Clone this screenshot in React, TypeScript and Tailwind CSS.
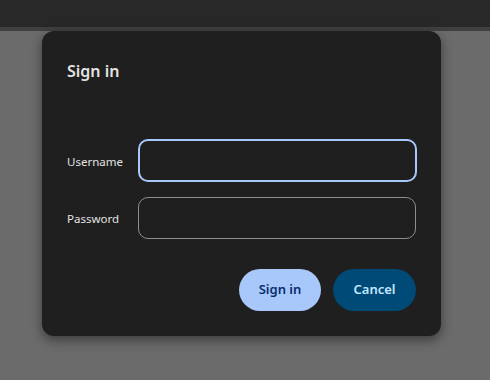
import React from 'react';

const SignInDialog: React.FC = () => {
  return (
    <div className="w-[399px] h-[305px] ml-[42px] rounded-[12px] bg-[#1f1f1f] shadow-[0_4px_12px_rgba(0,0,0,0.45)] pl-[25px] pr-[24px] pt-[28px] flex flex-col">
      <h1 className="text-[16px] leading-[24px] font-semibold text-[#e3e3e3]">Sign in</h1>

      {/* Form */}
      <div className="mt-[56px] grid grid-cols-[71px_1fr] gap-y-[15px] items-center">
        <label className="pt-[2px] text-[11.5px] text-[#e3e3e3]">Username</label>
        <input
          className="h-[43px] w-[279px] rounded-[10px] border-2 border-[#a8c7fa] bg-transparent outline-none px-3 text-[13px] text-[#e3e3e3]"
        />
        <label className="pt-[2px] text-[11.5px] text-[#e3e3e3]">Password</label>
        <input
          type="password"
          className="h-[42px] w-[278px] rounded-[10px] border border-[#8e8e8e] bg-transparent outline-none px-3 text-[13px] text-[#e3e3e3]"
        />
      </div>

      {/* Actions */}
      <div className="mt-[30px] flex justify-end gap-[12px] pr-[1px]">
        <button className="h-[42px] w-[82px] rounded-full bg-[#a8c7fa] text-[#062e6f] text-[13px] font-semibold">
          Sign in
        </button>
        <button className="h-[42px] w-[83px] rounded-full bg-[#004a77] text-[#c2e7ff] text-[13px] font-semibold">
          Cancel
        </button>
      </div>
    </div>
  );
};

export default function App() {
  return (
    <div className="w-[490px] h-[380px] bg-[#6b6b6b] overflow-hidden font-['Noto_Sans',sans-serif]">
      <div className="h-[27px] bg-[#282828]" />
      <div className="h-[4px] bg-[#404040]" />
      <SignInDialog />
    </div>
  );
}
